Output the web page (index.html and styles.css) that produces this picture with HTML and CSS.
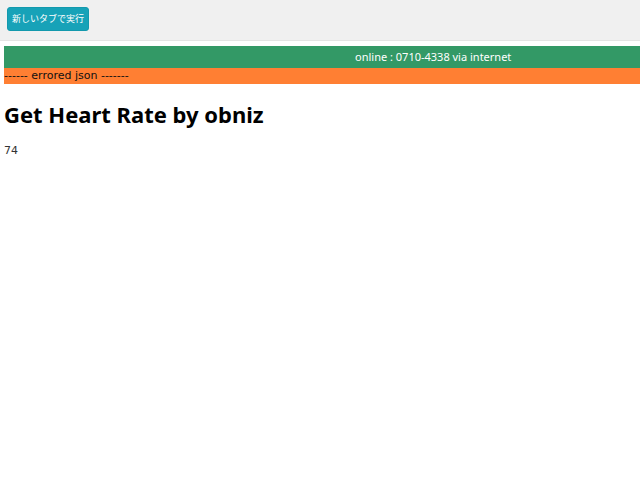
FILE: index.html
```html
<!DOCTYPE html>
<html lang="ja">
<head>
<meta charset="utf-8">
<link rel="stylesheet" href="styles.css">
</head>
<body>
<div class="toolbar">
  <button class="run-btn">新しいタブで実行</button>
</div>
<main class="content">
  <div class="status-online">online : 0710-4338 via internet</div>
  <div class="status-error">------ errored json -------</div>
  <h1 class="title">Get Heart Rate by obniz</h1>
  <div class="value">74</div>
</main>
</body>
</html>
```

FILE: styles.css
```css
html, body {
  margin: 0;
  padding: 0;
  background: #ffffff;
  font-family: "DejaVu Sans", Verdana, "Noto Sans CJK JP", sans-serif;
}
.toolbar {
  height: 41px;
  background: #f0f0f0;
  border-bottom: 1px solid #e4e4e4;
  padding: 7px 0 0 7px;
  box-sizing: border-box;
}
.run-btn {
  height: 24px;
  padding: 0 4px;
  background: #17a2b8;
  color: #ffffff;
  border: 1px solid #1399ad;
  border-radius: 3px;
  font-family: "Noto Sans CJK JP", sans-serif;
  font-size: 9px;
  line-height: 22px;
}
.content {
  padding: 5px 0 0 4px;
}
.status-online {
  height: 22px;
  background: #339966;
  color: #ffffff;
  font-family: "Noto Sans", sans-serif;
  font-size: 11px;
  line-height: 22px;
  padding-left: 351px;
}
.status-error {
  height: 16px;
  background: #ff7f33;
  color: #111111;
  font-size: 11px;
  line-height: 16px;
}
.title {
  margin: 16px 0 0 0;
  font-family: "Noto Sans", sans-serif;
  font-size: 22px;
  line-height: 28px;
  font-weight: bold;
  color: #000000;
}
.value {
  margin-top: 16px;
  font-size: 11px;
  color: #333333;
}
```
